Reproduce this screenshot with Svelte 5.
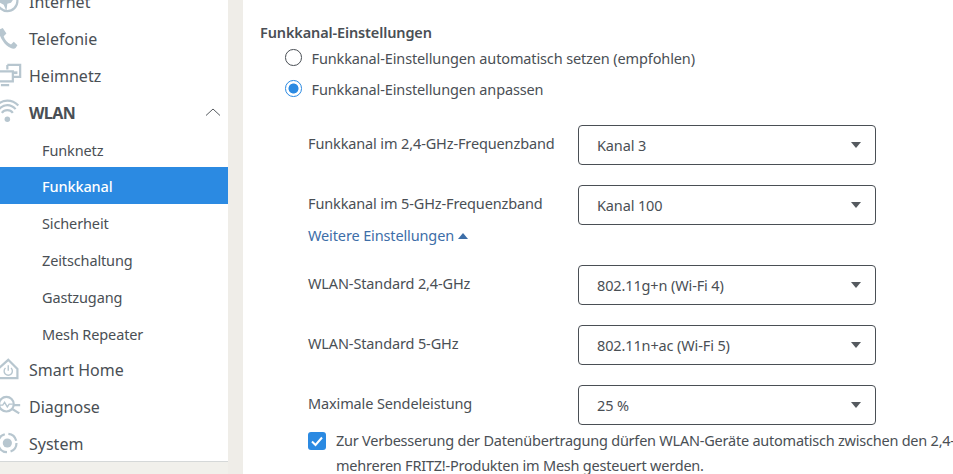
<script>
	const nav = [
		{ label: 'Internet', icon: 'globe' },
		{ label: 'Telefonie', icon: 'phone' },
		{ label: 'Heimnetz', icon: 'net' },
		{ label: 'WLAN', icon: 'wifi', open: true }
	];
	const sub = ['Funknetz', 'Funkkanal', 'Sicherheit', 'Zeitschaltung', 'Gastzugang', 'Mesh Repeater'];
	const navBottom = [
		{ label: 'Smart Home', icon: 'home' },
		{ label: 'Diagnose', icon: 'diag' },
		{ label: 'System', icon: 'sys' }
	];
	const channels = [
		{ label: 'Funkkanal im 2,4-GHz-Frequenzband', value: 'Kanal 3' },
		{ label: 'Funkkanal im 5-GHz-Frequenzband', value: 'Kanal 100' }
	];
	const standards = [
		{ label: 'WLAN-Standard 2,4-GHz', value: '802.11g+n (Wi-Fi 4)' },
		{ label: 'WLAN-Standard 5-GHz', value: '802.11n+ac (Wi-Fi 5)' },
		{ label: 'Maximale Sendeleistung', value: '25 %' }
	];
</script>

{#snippet icon(name)}
	<svg class="icon" viewBox="0 0 24 24" aria-hidden="true">
		{#if name === 'globe'}
			<circle cx="8" cy="12" r="11" class="line" />
			<path d="M0 8h16l-4 6-4 1-1 8-3-7-4-2z" class="fill" />
		{:else if name === 'phone'}
			<path d="M-1 3l4-2 4 6-3 3c1 4 4 7 8 9l3-3 4 4-2 3c-2 2-6 0-10-3C3 16-2 8-1 3z" class="fill" />
		{:else if name === 'net'}
			<path d="M8 1h14v13h-8M8 1v5" class="line" />
			<path d="M-2 8h16v11H-2zM1 23h9" class="line" />
			<path d="M14 8h5v3h-5z" class="fill" />
		{:else if name === 'wifi'}
			<circle cx="8" cy="21" r="3" class="fill" />
			<path d="M2 14c3-4 9-4 12 0M-1 10c5-6 13-6 18 0M-4 6c7-7 17-7 24 0" class="line" />
		{:else if name === 'home'}
			<path d="M-2 12L9 2l10 10v10H-2z" class="line" />
			<path d="M6 11a4.5 4.5 0 1 0 6 0" class="line thin" />
			<path d="M9 8v6" class="line thin" />
		{:else if name === 'diag'}
			<circle cx="7" cy="10" r="8" class="line" />
			<path d="M-1 11h4l2-3 3 5 2-3h4" class="line thin" />
			<path d="M13 15l8 5M15 11h7" class="line" />
		{:else}
			<circle cx="8" cy="12" r="5" class="fill" />
			<circle cx="8" cy="12" r="10" class="line dash" />
		{/if}
	</svg>
{/snippet}

{#snippet field(row)}
	<div class="row">
		<span class="label">{row.label}</span>
		<div class="select">
			<span>{row.value}</span>
			<i class="caret"></i>
		</div>
	</div>
{/snippet}

<div class="page">
	<aside class="sidebar">
		<nav class="nav">
			{#each nav as item}
				<div class="nav-item" class:open={item.open}>
					{@render icon(item.icon)}
					<span>{item.label}</span>
					{#if item.open}
						<svg class="chevron" viewBox="0 0 16 8" aria-hidden="true"><path d="M1 7.5L8 1l7 6.5" /></svg>
					{/if}
				</div>
			{/each}
			{#each sub as item}
				<div class="sub-item" class:active={item === 'Funkkanal'}>{item}</div>
			{/each}
			{#each navBottom as item}
				<div class="nav-item">
					{@render icon(item.icon)}
					<span>{item.label}</span>
				</div>
			{/each}
		</nav>
		<div class="side-foot"></div>
	</aside>

	<main class="content">
		<h2>Funkkanal-Einstellungen</h2>
		<label class="radio"><i class="dot"></i>Funkkanal-Einstellungen automatisch setzen (empfohlen)</label>
		<label class="radio"><i class="dot on"></i>Funkkanal-Einstellungen anpassen</label>

		<div class="fields">
			{#each channels as row}
				{@render field(row)}
			{/each}
			<a class="more" href="#more">Weitere Einstellungen <i class="up"></i></a>
			{#each standards as row}
				{@render field(row)}
			{/each}
			<div class="check">
				<i class="box">
					<svg viewBox="0 0 18 18" aria-hidden="true"><path d="M4 9.5l3.5 3.5L14 5.5" /></svg>
				</i>
				<p>Zur Verbesserung der Datenübertragung dürfen WLAN-Geräte automatisch zwischen den 2,4-<br />mehreren FRITZ!-Produkten im Mesh gesteuert werden.</p>
			</div>
		</div>
	</main>
</div>

<style>
	:global(body) {
		margin: 0;
		background: #fff;
	}

	.page {
		display: flex;
		width: 953px;
		height: 474px;
		overflow: hidden;
		background: #efede8;
		font-family: 'Noto Sans', sans-serif;
		font-size: 14.5px;
		letter-spacing: -0.13px;
		color: #4a4f55;
	}

	.sidebar {
		width: 228px;
		flex: none;
		background: #fff;
		display: flex;
		flex-direction: column;
	}

	.nav {
		margin-top: -17px;
		border-bottom: 1px solid #d5d8d8;
	}

	.nav-item {
		display: flex;
		align-items: center;
		box-sizing: border-box;
		height: 36.8px;
		padding: 2px 0 0 29px;
		position: relative;
		font-size: 16px;
		letter-spacing: 0;
	}

	.nav-item.open {
		font-weight: 700;
		letter-spacing: -0.6px;
	}

	.icon {
		position: absolute;
		left: 0;
		top: 7px;
		width: 22px;
		height: 22px;
		overflow: visible;
	}

	.line {
		fill: none;
		stroke: #b7c6cf;
		stroke-width: 2.4;
	}

	.thin {
		stroke-width: 1.5;
	}

	.dash {
		stroke-dasharray: 12 4;
	}

	.fill {
		fill: #b7c6cf;
	}

	.chevron {
		position: absolute;
		right: 7px;
		top: 15px;
		width: 16px;
		height: 8px;
	}

	.chevron path {
		fill: none;
		stroke: #555a5f;
		stroke-width: 1;
	}

	.sub-item {
		display: flex;
		align-items: center;
		box-sizing: border-box;
		height: 36.8px;
		padding: 2px 0 0 42px;
	}

	.sub-item.active {
		background: #2b8ae2;
		color: #fff;
		font-weight: 500;
	}

	.side-foot {
		flex: 1;
		background: #f1f0eb;
	}

	.content {
		margin-left: 15px;
		flex: 1;
		min-width: 0;
		background: #fff;
		padding: 22px 0 0 17px;
	}

	h2 {
		margin: 0;
		font-size: 14.5px;
		line-height: 20px;
		font-weight: 600;
		color: #4a4f55;
	}

	.radio {
		display: flex;
		align-items: center;
		height: 31px;
		margin-left: 25px;
		gap: 10px;
		white-space: nowrap;
	}

	.dot {
		width: 14.5px;
		height: 14.5px;
		border: 1.5px solid #4a4f55;
		border-radius: 50%;
		flex: none;
		box-sizing: content-box;
	}

	.dot.on {
		border-color: #2b8ae2;
		background: radial-gradient(circle, #2b8ae2 0 4.6px, #fff 5.4px);
	}

	.fields {
		margin: 21px 0 0 48px;
	}

	.row {
		display: flex;
		align-items: center;
		height: 40px;
		margin-bottom: 20px;
	}

	.label {
		width: 270px;
		flex: none;
		margin-top: -4px;
		white-space: nowrap;
	}

	.select {
		width: 298px;
		height: 40px;
		box-sizing: border-box;
		border: 1px solid #4a4f55;
		border-radius: 4px;
		display: flex;
		align-items: center;
		justify-content: space-between;
		padding: 0 14px 0 18px;
	}

	.caret {
		width: 0;
		height: 0;
		border-left: 5.5px solid transparent;
		border-right: 5.5px solid transparent;
		border-top: 6px solid #555a5f;
		margin-top: -1px;
	}

	.more {
		display: block;
		height: 40px;
		margin-top: -20px;
		line-height: 20px;
		color: #3d6ea8;
		text-decoration: none;
	}

	.up {
		display: inline-block;
		width: 0;
		height: 0;
		border-left: 5px solid transparent;
		border-right: 5px solid transparent;
		border-bottom: 6px solid #3d6ea8;
		margin: 0 0 2px 0;
	}

	.check {
		display: flex;
		gap: 10px;
		margin-top: -17px;
		white-space: nowrap;
		letter-spacing: -0.23px;
	}

	.box {
		width: 18px;
		height: 18px;
		margin-top: 4px;
		background: #2b8ae2;
		border-radius: 3px;
		flex: none;
	}

	.box svg {
		display: block;
	}

	.box path {
		fill: none;
		stroke: #fff;
		stroke-width: 2;
	}

	.check p {
		margin: 0;
		line-height: 25px;
	}
</style>
